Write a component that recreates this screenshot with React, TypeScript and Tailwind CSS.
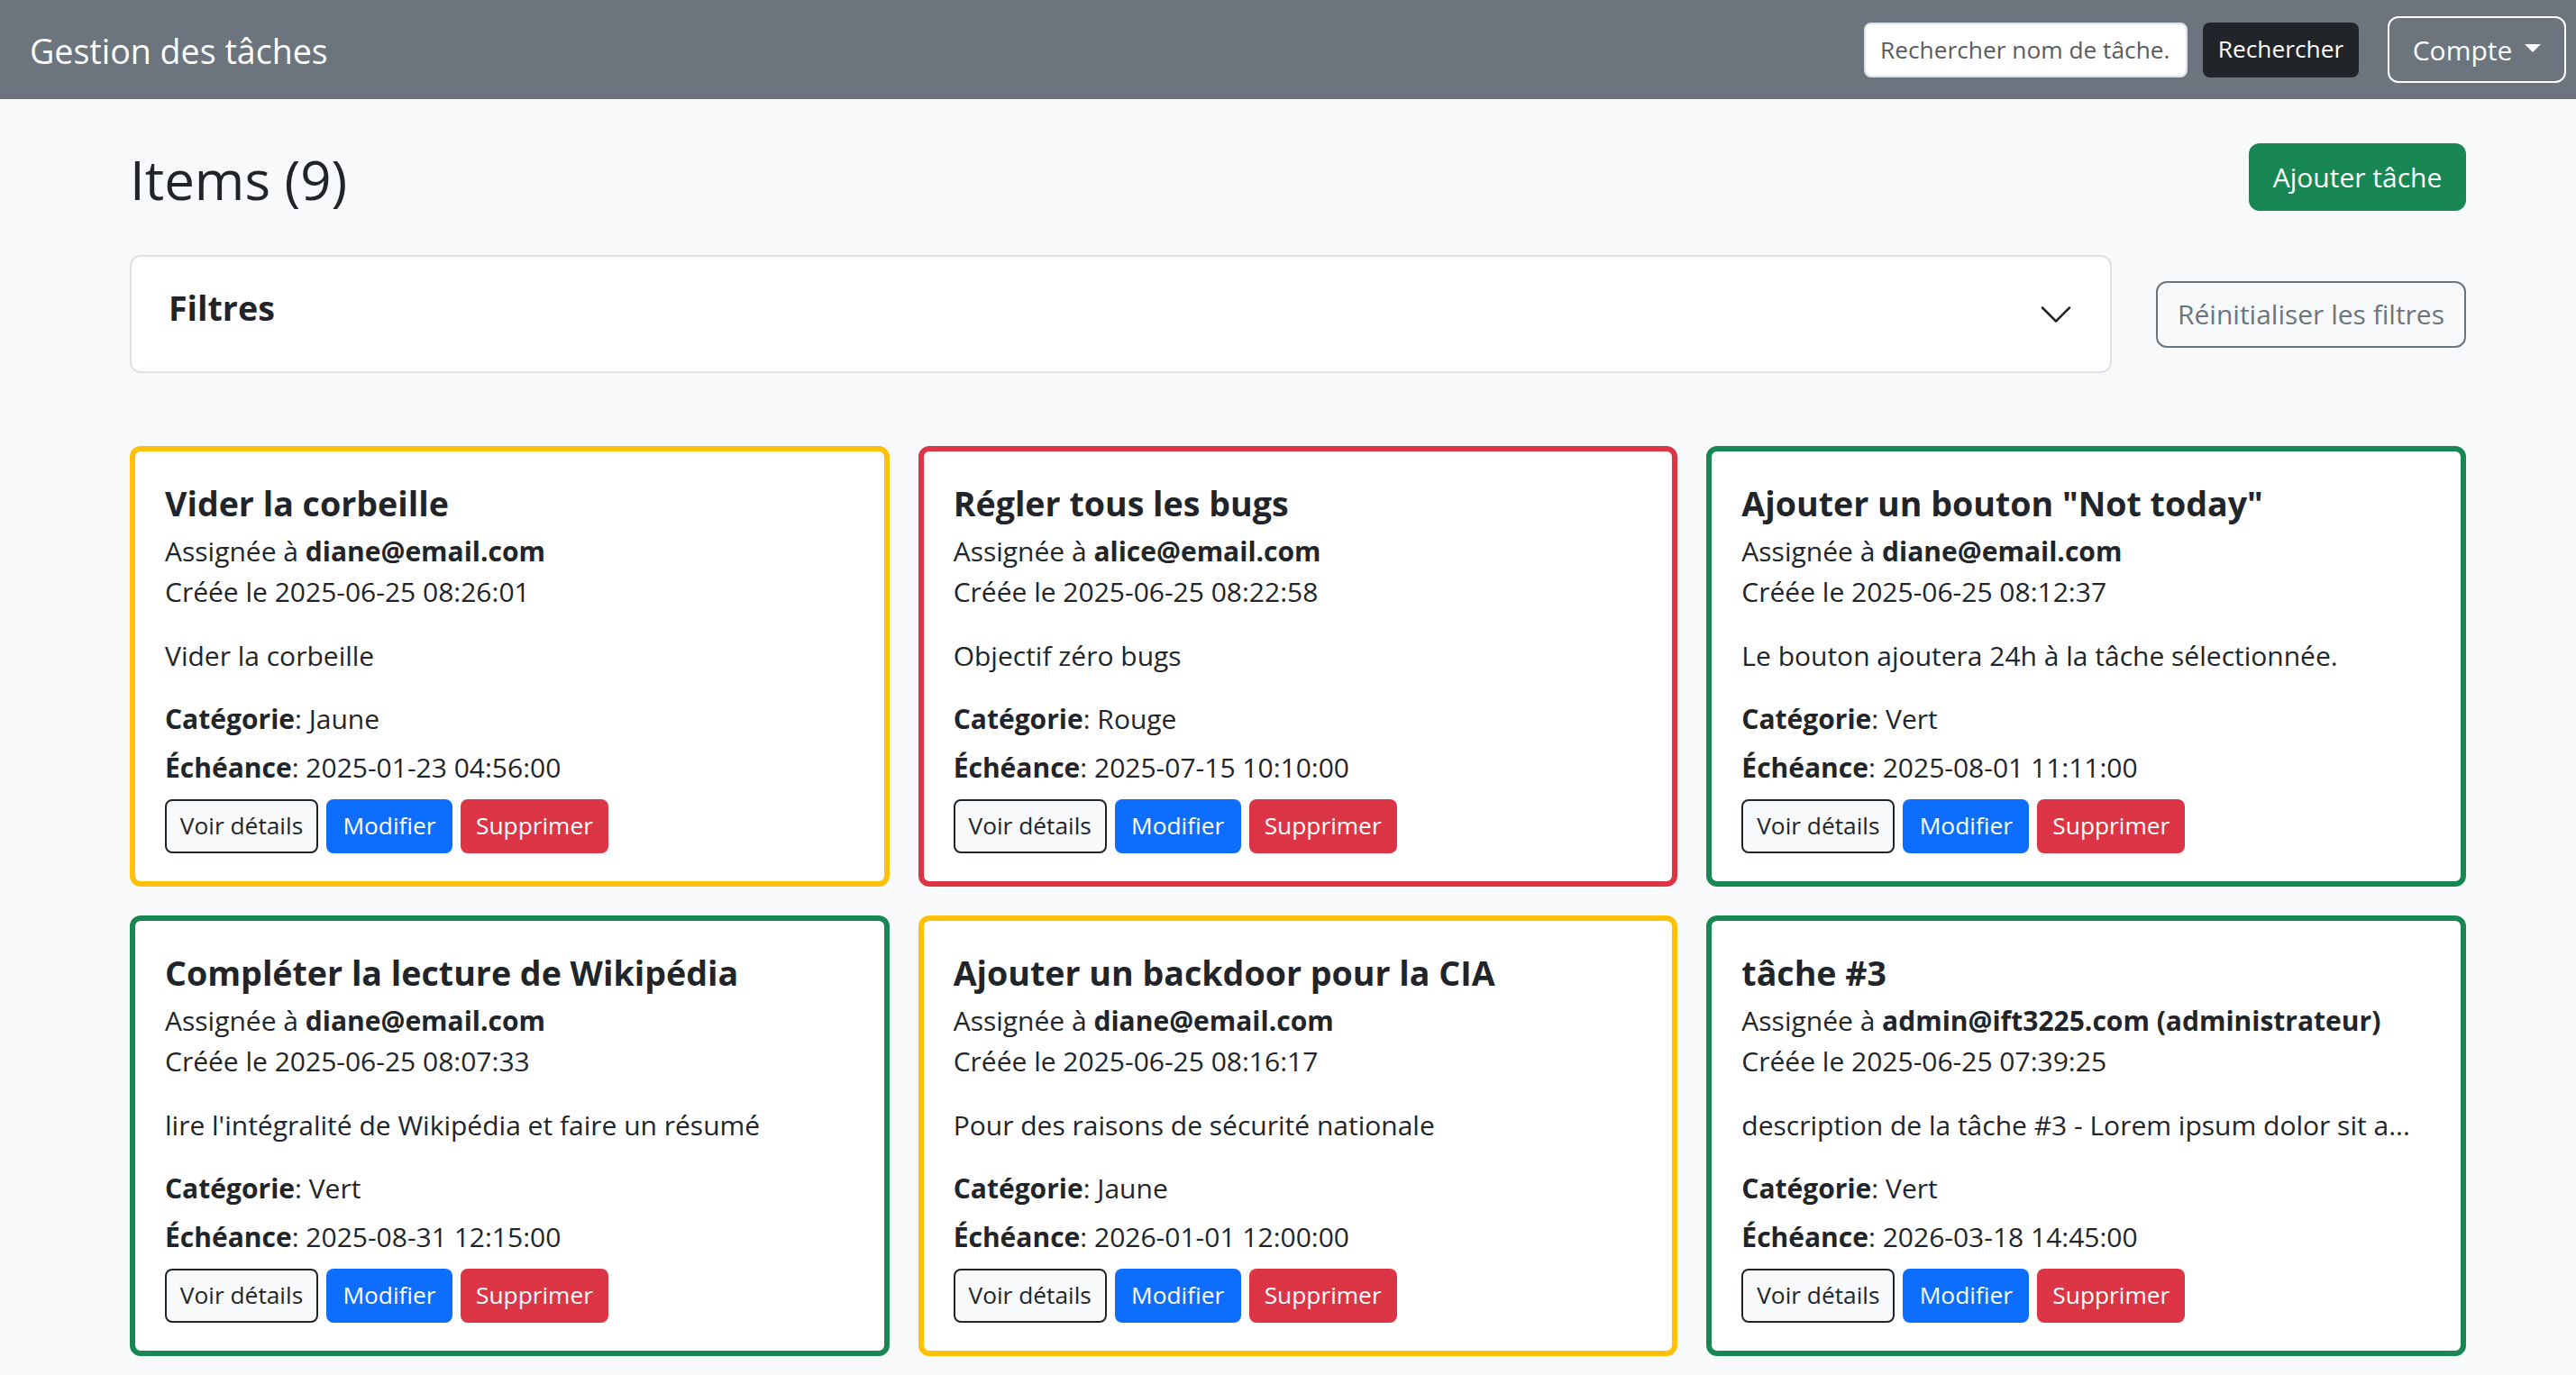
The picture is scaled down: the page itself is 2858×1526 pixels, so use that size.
import React from "react";

type Task = {
  title: string;
  user: string;
  created: string;
  description: string;
  category: string;
  due: string;
  border: string;
};

const tasks: Task[] = [
  {
    title: "Vider la corbeille",
    user: "diane@email.com",
    created: "2025-06-25 08:26:01",
    description: "Vider la corbeille",
    category: "Jaune",
    due: "2025-01-23 04:56:00",
    border: "border-[#ffc107]",
  },
  {
    title: "Régler tous les bugs",
    user: "alice@email.com",
    created: "2025-06-25 08:22:58",
    description: "Objectif zéro bugs",
    category: "Rouge",
    due: "2025-07-15 10:10:00",
    border: "border-[#dc3545]",
  },
  {
    title: 'Ajouter un bouton "Not today"',
    user: "diane@email.com",
    created: "2025-06-25 08:12:37",
    description: "Le bouton ajoutera 24h à la tâche sélectionnée.",
    category: "Vert",
    due: "2025-08-01 11:11:00",
    border: "border-[#198754]",
  },
  {
    title: "Compléter la lecture de Wikipédia",
    user: "diane@email.com",
    created: "2025-06-25 08:07:33",
    description: "lire l'intégralité de Wikipédia et faire un résumé",
    category: "Vert",
    due: "2025-08-31 12:15:00",
    border: "border-[#198754]",
  },
  {
    title: "Ajouter un backdoor pour la CIA",
    user: "diane@email.com",
    created: "2025-06-25 08:16:17",
    description: "Pour des raisons de sécurité nationale",
    category: "Jaune",
    due: "2026-01-01 12:00:00",
    border: "border-[#ffc107]",
  },
  {
    title: "tâche #3",
    user: "admin@ift3225.com (administrateur)",
    created: "2025-06-25 07:39:25",
    description: "description de la tâche #3 - Lorem ipsum dolor sit a...",
    category: "Vert",
    due: "2026-03-18 14:45:00",
    border: "border-[#198754]",
  },
];

const TaskCard: React.FC<{ task: Task }> = ({ task }) => {
  return (
    <div className={`bg-white border-[6px] ${task.border} rounded-[12px] px-[33px] pt-[34px] pb-[31px]`}>
      <h5 className="text-[37.6px] leading-[48px] font-bold whitespace-nowrap">{task.title}</h5>
      <div className="mt-[6px] text-[30px] leading-[45px]">
        <p>
          Assignée à <strong className="font-bold">{task.user}</strong>
        </p>
        <p>Créée le {task.created}</p>
        <p className="mt-[26px] whitespace-nowrap">{task.description}</p>
        <p className="mt-[25px]">
          <strong className="font-bold">Catégorie</strong>: {task.category}
        </p>
        <p className="mt-[9px]">
          <strong className="font-bold">Échéance</strong>: {task.due}
        </p>
      </div>
      <div className="mt-[13px] flex gap-[9px] text-[26.3px]">
        <button className="w-[170px] h-[60px] rounded-[8px] border-2 border-[#212529] bg-[#f8f9fa] text-[#212529]">
          Voir détails
        </button>
        <button className="w-[140px] h-[60px] rounded-[8px] bg-[#0d6efd] text-white">Modifier</button>
        <button className="w-[164px] h-[60px] rounded-[8px] bg-[#dc3545] text-white">Supprimer</button>
      </div>
    </div>
  );
};

const App: React.FC = () => {
  return (
    <div className="min-h-screen bg-[#f8f9fa] text-[#212529] font-['Open_Sans',sans-serif]">
      {/* barre de navigation */}
      <nav className="h-[110px] bg-[#6c757d] flex items-center justify-between pl-[33px] pr-[11px]">
        <span className="pt-[4px] text-[37.6px] text-white">Gestion des tâches</span>
        <div className="flex items-center">
          <input
            type="text"
            placeholder="Rechercher nom de tâche.."
            className="w-[359px] h-[61px] bg-white border-2 border-[#dee2e6] rounded-[8px] px-[16px] text-[26.3px] placeholder:text-[#595c5f] outline-none"
          />
          <button className="ml-[17px] w-[173px] h-[61px] bg-[#212529] rounded-[8px] text-white text-[26.3px]">
            Rechercher
          </button>
          <button className="ml-[32px] w-[198px] h-[74px] border-2 border-white rounded-[12px] text-white text-[30px] flex items-center justify-center gap-[14px]">
            <span>Compte</span>
            <span className="mb-[4px] border-t-[9px] border-x-[9.5px] border-x-transparent border-t-white" />
          </button>
        </div>
      </nav>

      <main className="pl-[144px] pr-[122px] pt-[48px] pb-[20px]">
        <div className="flex items-center justify-between">
          <h2 className="text-[60px] leading-[83px] -mb-[6px]">Items (9)</h2>
          <button className="w-[241px] h-[75px] bg-[#198754] rounded-[12px] text-white text-[30px]">
            Ajouter tâche
          </button>
        </div>

        <div className="mt-[48px] flex items-center gap-[49px]">
          <div className="flex-1 h-[131px] bg-white border-2 border-[#dee2e6] rounded-[12px] flex items-center justify-between pl-[41px] pr-[40px]">
            <span className="text-[37.6px] leading-[48px] font-bold mb-[13px]">Filtres</span>
            <svg width="40" height="40" viewBox="0 0 16 16" fill="none" stroke="#212529" strokeLinecap="round" strokeLinejoin="round">
              <path d="M2 5L8 11L14 5" />
            </svg>
          </div>
          <button className="w-[344px] h-[74px] border-2 border-[#6c757d] rounded-[12px] text-[#6c757d] text-[30px]">
            Réinitialiser les filtres
          </button>
        </div>

        <div className="mt-[81px] grid grid-cols-3 gap-[32px]">
          {tasks.map((task, index) => (
            <TaskCard key={index} task={task} />
          ))}
        </div>
      </main>
    </div>
  );
};

export default App;
